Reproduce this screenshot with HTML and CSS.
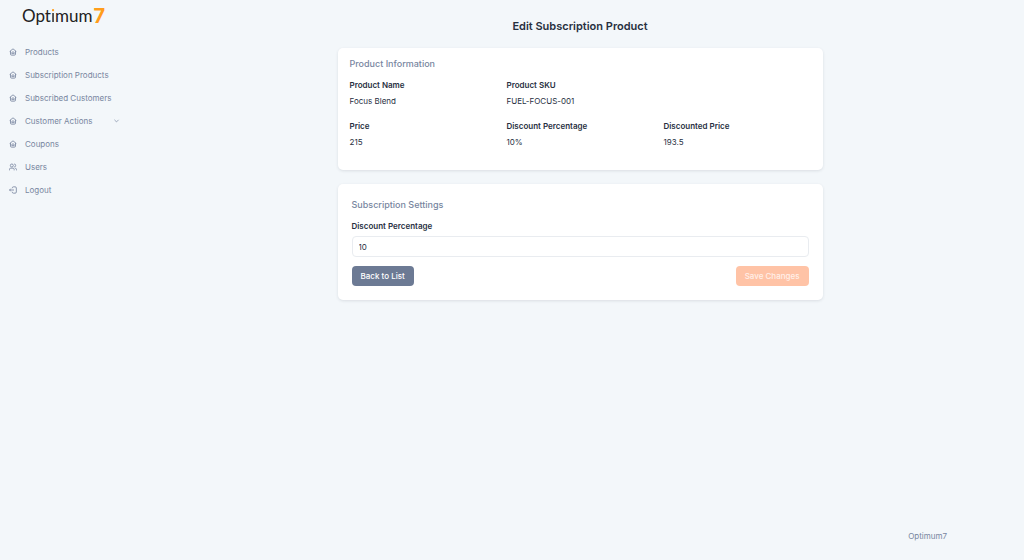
FILE: index.html
```html
<!DOCTYPE html>
<html lang="en">
    <head>
        <meta charset="UTF-8">
        <meta name="viewport" content="width=device-width, initial-scale=1">
        <title>Edit Subscription Product</title>
        <link rel="stylesheet" href="styles.css">
    </head>
    <body>
        <!-- Shared icon shapes -->
        <svg class="icon-defs" aria-hidden="true">
            <symbol id="icon-home" viewBox="0 0 24 24">
                <path d="M2 10.5 L12 2.5 L22 10.5 M4.5 9 V18 Q4.5 21.5 8 21.5 H16 Q19.5 21.5 19.5 18 V9"/>
                <path d="M8.5 17 V14 Q8.5 12 10.5 12 H13.5 Q15.5 12 15.5 14 V17 Z"/>
            </symbol>
            <symbol id="icon-users" viewBox="0 0 24 24">
                <circle cx="8.5" cy="7.5" r="4.5"/>
                <path d="M1.5 22 V19 Q1.5 15.5 5 15.5 H12 Q15.5 15.5 15.5 19 V22 M15.5 3 A4.5 4.5 0 0 1 15.5 12 M18.5 15.5 Q22.5 16 22.5 20 V22"/>
            </symbol>
            <symbol id="icon-logout" viewBox="0 0 24 24">
                <path d="M10 6.5 V5.5 Q10 2.5 13 2.5 H18.5 Q22 2.5 22 6 V18 Q22 21.5 18.5 21.5 H13 Q10 21.5 10 18.5 V17.5 M15 12 H1.5 M5.5 8 L1.5 12 L5.5 16"/>
            </symbol>
        </svg>

        <aside class="sidebar">
            <a class="logo" href="#">Opt<span class="logo-i">i</span>mum<span class="logo-seven">7</span></a>
            <nav class="menu">
                <a class="menu-item" href="#"><svg class="icon"><use href="#icon-home"/></svg>Products</a>
                <a class="menu-item" href="#"><svg class="icon"><use href="#icon-home"/></svg>Subscription Products</a>
                <a class="menu-item" href="#"><svg class="icon"><use href="#icon-home"/></svg>Subscribed Customers</a>
                <a class="menu-item" href="#">
                    <svg class="icon"><use href="#icon-home"/></svg>Customer Actions
                    <svg class="chevron" viewBox="0 0 10 10"><path d="M2 4 L5 7 L8 4"/></svg>
                </a>
                <a class="menu-item" href="#"><svg class="icon"><use href="#icon-home"/></svg>Coupons</a>
                <a class="menu-item" href="#"><svg class="icon"><use href="#icon-users"/></svg>Users</a>
                <a class="menu-item" href="#"><svg class="icon"><use href="#icon-logout"/></svg>Logout</a>
            </nav>
        </aside>

        <div class="page">
            <main class="content">
                <h1>Edit Subscription Product</h1>

                <!-- Product Information -->
                <section class="card card-info">
                    <h2>Product Information</h2>
                    <dl class="info-grid">
                        <div class="info">
                            <dt>Product Name</dt>
                            <dd>Focus Blend</dd>
                        </div>
                        <div class="info">
                            <dt>Product SKU</dt>
                            <dd>FUEL-FOCUS-001</dd>
                        </div>
                        <div class="info info-first">
                            <dt>Price</dt>
                            <dd>215</dd>
                        </div>
                        <div class="info">
                            <dt>Discount Percentage</dt>
                            <dd>10%</dd>
                        </div>
                        <div class="info">
                            <dt>Discounted Price</dt>
                            <dd>193.5</dd>
                        </div>
                    </dl>
                </section>

                <!-- Subscription Settings -->
                <form class="card card-settings">
                    <h2>Subscription Settings</h2>
                    <label for="discount">Discount Percentage</label>
                    <input id="discount" type="text" inputmode="numeric" value="10">
                    <div class="actions">
                        <button class="btn btn-back" type="button">Back to List</button>
                        <button class="btn btn-save" type="submit" disabled>Save Changes</button>
                    </div>
                </form>
            </main>
            <footer>Optimum7</footer>
        </div>
    </body>
</html>
```

FILE: styles.css
```css
/* General */
* {
    box-sizing: border-box;
}

body {
    margin: 0;
    display: flex;
    min-height: 100vh;
    background-color: #f3f7fa;
    color: #27303f;
    font-family: Inter, "Liberation Sans", sans-serif;
    font-size: 8px;
    line-height: 12px;
}

.icon-defs {
    position: absolute;
    width: 0;
    height: 0;
}

/* Sidebar */
.sidebar {
    flex: 0 0 136px;
}

.logo {
    display: flex;
    align-items: flex-start;
    height: 40px;
    padding: 4px 0 0 22px;
    color: #222;
    font-family: Lato, sans-serif;
    font-size: 17px;
    line-height: 24px;
    text-decoration: none;
}

/* Orange dot over a dark stem */
.logo-i {
    background: linear-gradient(#ff9d1c 8px, #222 8px);
    background-clip: text;
    -webkit-background-clip: text;
    color: transparent;
}

.logo-seven {
    margin-left: 1px;
    color: #ff9d1c;
    font-family: Inter, sans-serif;
    font-size: 20px;
    font-weight: 700;
}

.menu {
    display: flex;
    flex-direction: column;
}

.menu-item {
    display: flex;
    align-items: center;
    height: 23px;
    padding: 0 16px 0 9px;
    color: #7886a0;
    text-decoration: none;
}

.icon {
    width: 8px;
    height: 8px;
    margin-right: 8px;
    fill: none;
    stroke: #7886a0;
    stroke-width: 2.5;
}

.chevron {
    width: 7px;
    height: 7px;
    margin-left: auto;
    fill: none;
    stroke: #7886a0;
}

/* Page */
.page {
    flex: 1;
    display: flex;
    flex-direction: column;
}

.content {
    width: 100%;
    max-width: 485px;
    margin: 0 auto;
}

h1 {
    margin: 18px 0 14px;
    font-size: 11px;
    font-weight: 600;
    line-height: 16px;
    text-align: center;
}

h2 {
    margin: 0 0 9px;
    color: #7886a0;
    font-size: 9px;
    font-weight: 500;
    line-height: 12px;
}

/* Cards */
.card {
    margin-bottom: 14px;
    background-color: #fff;
    border-radius: 5px;
    box-shadow: 0 1px 3px rgba(39, 48, 63, 0.12);
}

.card-info {
    padding: 10px 12px 9px;
}

.card-settings {
    padding: 15px 14px 14px;
}

.info-grid {
    display: grid;
    grid-template-columns: repeat(3, 1fr);
    column-gap: 10px;
    margin: 0;
}

.info {
    padding-bottom: 13px;
}

.info-first {
    grid-column: 1;
}

dt,
label {
    display: block;
    font-weight: 600;
}

dd {
    margin: 4px 0 0;
}

input {
    display: block;
    width: 100%;
    height: 21px;
    margin: 4px 0 9px;
    padding: 0 6px;
    border: 1px solid #e9ecf0;
    border-radius: 4px;
    background-color: #fff;
    color: inherit;
    font: inherit;
}

.actions {
    display: flex;
    justify-content: space-between;
}

.btn {
    height: 20px;
    padding: 0 9px;
    border: none;
    border-radius: 4px;
    color: #fff;
    font: inherit;
    font-weight: 500;
}

.btn-back {
    background-color: #6c7a94;
}

.btn-save {
    background-color: #ffc3a6;
    color: #fff0e9;
}

footer {
    margin-top: auto;
    padding: 0 77px 18px;
    color: #7886a0;
    text-align: right;
}
```
